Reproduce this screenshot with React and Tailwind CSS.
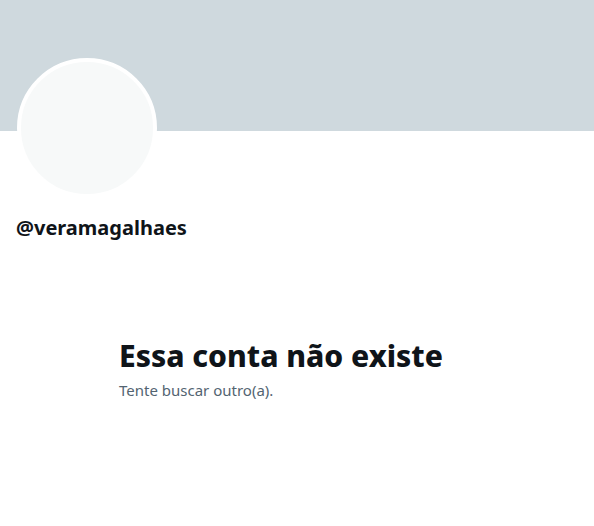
export default function App() {
  return (
    <div className="h-[526px] w-[594px] bg-white font-['Noto_Sans',sans-serif] overflow-hidden">
      {/* Banner */}
      <div className="h-[131px] bg-[#cfd9de]" />

      {/* Avatar + handle */}
      <div className="px-4">
        <div className="-mt-[73px] h-[140px] w-[140px] rounded-full border-4 border-white bg-[#f7f9f9] ml-[1px]" />
        <div className="mt-[18px] text-[20px] font-bold leading-6 text-[#0f1419]">
          @veramagalhaes
        </div>
      </div>

      {/* Empty state */}
      <div className="mt-[98px] pl-[119px]">
        <h2 className="text-[30px] font-extrabold leading-9 text-[#0f1419]">
          Essa conta não existe
        </h2>
        <p className="mt-[6px] text-[15px] leading-5 text-[#536471]">
          Tente buscar outro(a).
        </p>
      </div>
    </div>
  );
}
